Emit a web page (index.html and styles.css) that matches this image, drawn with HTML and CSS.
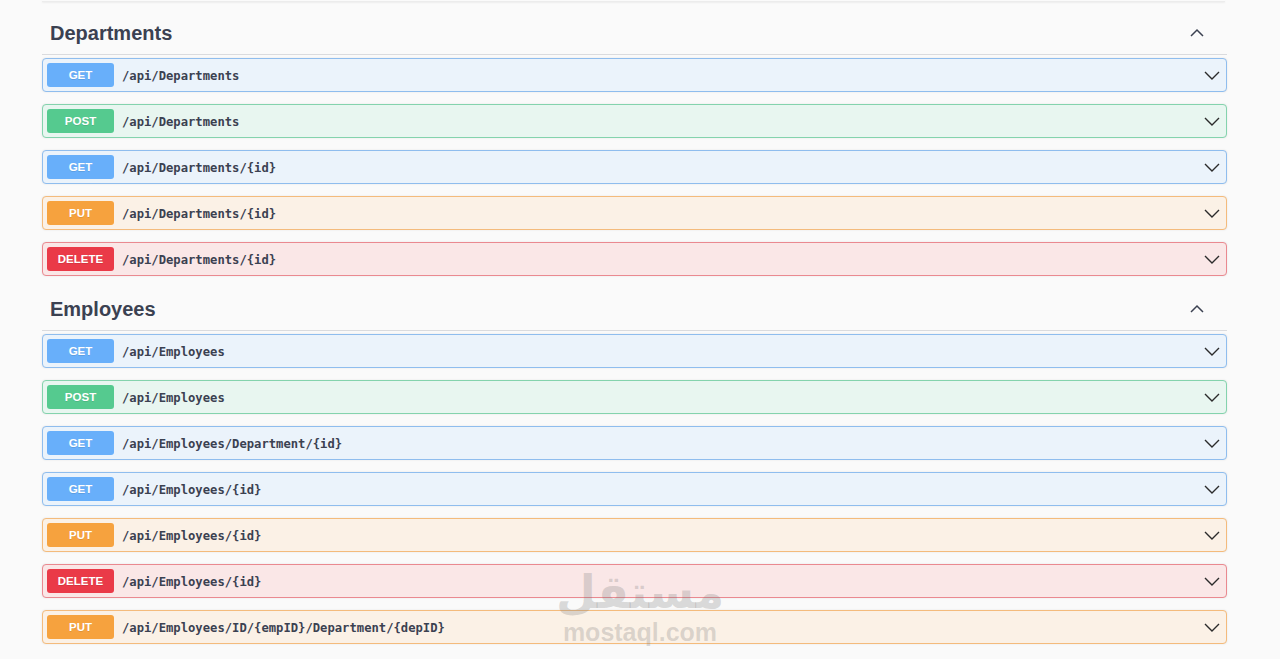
FILE: index.html
```html
<!DOCTYPE html>
<html lang="en">
<head>
    <meta charset="UTF-8">
    <title>Swagger UI</title>
    <link rel="stylesheet" href="styles.css">
</head>
<body>
<div class="wrapper">
    <div class="top-edge"></div>

    <!-- Departments -->
    <div class="tag-section">
        <div class="tag-header">
            <h3>Departments</h3>
            <svg class="caret" width="20" height="20" viewBox="0 0 20 20"><path d="M4 13 L10 7 L16 13" fill="none" stroke="#3b4151" stroke-width="1.5"/></svg>
        </div>
        <div class="op get"><span class="method">GET</span><span class="path">/api/Departments</span><svg class="arrow" width="20" height="20" viewBox="0 0 20 20"><path d="M3 7 L10 14 L17 7" fill="none" stroke="#2b2b2b" stroke-width="1.4"/></svg></div>
        <div class="op post"><span class="method">POST</span><span class="path">/api/Departments</span><svg class="arrow" width="20" height="20" viewBox="0 0 20 20"><path d="M3 7 L10 14 L17 7" fill="none" stroke="#2b2b2b" stroke-width="1.4"/></svg></div>
        <div class="op get"><span class="method">GET</span><span class="path">/api/Departments/{id}</span><svg class="arrow" width="20" height="20" viewBox="0 0 20 20"><path d="M3 7 L10 14 L17 7" fill="none" stroke="#2b2b2b" stroke-width="1.4"/></svg></div>
        <div class="op put"><span class="method">PUT</span><span class="path">/api/Departments/{id}</span><svg class="arrow" width="20" height="20" viewBox="0 0 20 20"><path d="M3 7 L10 14 L17 7" fill="none" stroke="#2b2b2b" stroke-width="1.4"/></svg></div>
        <div class="op delete"><span class="method">DELETE</span><span class="path">/api/Departments/{id}</span><svg class="arrow" width="20" height="20" viewBox="0 0 20 20"><path d="M3 7 L10 14 L17 7" fill="none" stroke="#2b2b2b" stroke-width="1.4"/></svg></div>
    </div>

    <!-- Employees -->
    <div class="tag-section">
        <div class="tag-header">
            <h3>Employees</h3>
            <svg class="caret" width="20" height="20" viewBox="0 0 20 20"><path d="M4 13 L10 7 L16 13" fill="none" stroke="#3b4151" stroke-width="1.5"/></svg>
        </div>
        <div class="op get"><span class="method">GET</span><span class="path">/api/Employees</span><svg class="arrow" width="20" height="20" viewBox="0 0 20 20"><path d="M3 7 L10 14 L17 7" fill="none" stroke="#2b2b2b" stroke-width="1.4"/></svg></div>
        <div class="op post"><span class="method">POST</span><span class="path">/api/Employees</span><svg class="arrow" width="20" height="20" viewBox="0 0 20 20"><path d="M3 7 L10 14 L17 7" fill="none" stroke="#2b2b2b" stroke-width="1.4"/></svg></div>
        <div class="op get"><span class="method">GET</span><span class="path">/api/Employees/Department/{id}</span><svg class="arrow" width="20" height="20" viewBox="0 0 20 20"><path d="M3 7 L10 14 L17 7" fill="none" stroke="#2b2b2b" stroke-width="1.4"/></svg></div>
        <div class="op get"><span class="method">GET</span><span class="path">/api/Employees/{id}</span><svg class="arrow" width="20" height="20" viewBox="0 0 20 20"><path d="M3 7 L10 14 L17 7" fill="none" stroke="#2b2b2b" stroke-width="1.4"/></svg></div>
        <div class="op put"><span class="method">PUT</span><span class="path">/api/Employees/{id}</span><svg class="arrow" width="20" height="20" viewBox="0 0 20 20"><path d="M3 7 L10 14 L17 7" fill="none" stroke="#2b2b2b" stroke-width="1.4"/></svg></div>
        <div class="op delete"><span class="method">DELETE</span><span class="path">/api/Employees/{id}</span><svg class="arrow" width="20" height="20" viewBox="0 0 20 20"><path d="M3 7 L10 14 L17 7" fill="none" stroke="#2b2b2b" stroke-width="1.4"/></svg></div>
        <div class="op put"><span class="method">PUT</span><span class="path">/api/Employees/ID/{empID}/Department/{depID}</span><svg class="arrow" width="20" height="20" viewBox="0 0 20 20"><path d="M3 7 L10 14 L17 7" fill="none" stroke="#2b2b2b" stroke-width="1.4"/></svg></div>
    </div>
</div>

<div class="watermark">
    <div class="wm-logo">مستقل</div>
    <div class="wm-text">mostaql.com</div>
</div>
</body>
</html>
```

FILE: styles.css
```css
* {
    margin: 0;
    padding: 0;
    box-sizing: border-box;
}

body {
    background-color: #fafafa;
    font-family: "Liberation Sans", Arial, sans-serif;
    color: #3b4151;
    overflow: hidden;
}

.wrapper {
    padding: 0 53px 0 42px;
}

.top-edge {
    height: 2px;
    margin-right: 2px;
    border-bottom: 1px solid #ececec;
    box-shadow: 0 1px 2px rgba(0, 0, 0, 0.06);
}

.tag-section {
    margin-top: 10px;
}

.tag-section + .tag-section {
    margin-top: 0;
}

.tag-header {
    display: flex;
    align-items: center;
    justify-content: space-between;
    height: 43px;
    padding: 0 20px 0 8px;
    border-bottom: 1px solid #dadbde;
    margin-bottom: 3px;
}

.tag-header h3 {
    font-size: 20px;
    font-weight: bold;
    color: #3b4151;
}

.caret {
    display: block;
}

.op {
    display: flex;
    align-items: center;
    height: 34px;
    padding: 0 4px;
    margin-bottom: 12px;
    border: 1px solid;
    border-radius: 4px;
    box-shadow: 0 0 2px rgba(0, 0, 0, 0.1);
}

.method {
    width: 67px;
    height: 24px;
    line-height: 24px;
    border-radius: 3px;
    text-align: center;
    color: #fff;
    font-size: 11.5px;
    font-weight: bold;
    text-shadow: 0 1px 0 rgba(0, 0, 0, 0.1);
    flex-shrink: 0;
}

.path {
    flex: 1;
    margin-left: 8px;
    padding-top: 2px;
    font-family: "DejaVu Sans Mono", "Liberation Mono", monospace;
    font-size: 12.2px;
    font-weight: bold;
    color: #3b4151;
}

.arrow {
    display: block;
}

.get {
    background-color: #ebf3fb;
    border-color: #8fbdee;
}

.get .method {
    background-color: #68affa;
}

.post {
    background-color: #e8f6f0;
    border-color: #84d3ad;
}

.post .method {
    background-color: #55ca8f;
}

.put {
    background-color: #fbf1e6;
    border-color: #f4bb7c;
}

.put .method {
    background-color: #f6a23e;
}

.delete {
    background-color: #fae7e7;
    border-color: #ea8990;
}

.delete .method {
    background-color: #ea3a48;
}

/* watermark over the list */
.watermark {
    position: absolute;
    left: 555px;
    top: 565px;
    width: 170px;
    text-align: center;
    color: rgba(120, 120, 120, 0.26);
    pointer-events: none;
}

.wm-logo {
    font-family: "DejaVu Sans", sans-serif;
    font-size: 46px;
    font-weight: bold;
    line-height: 54px;
}

.wm-text {
    font-family: "Liberation Sans", Arial, sans-serif;
    font-size: 25px;
    font-weight: bold;
    line-height: 26px;
}
```
